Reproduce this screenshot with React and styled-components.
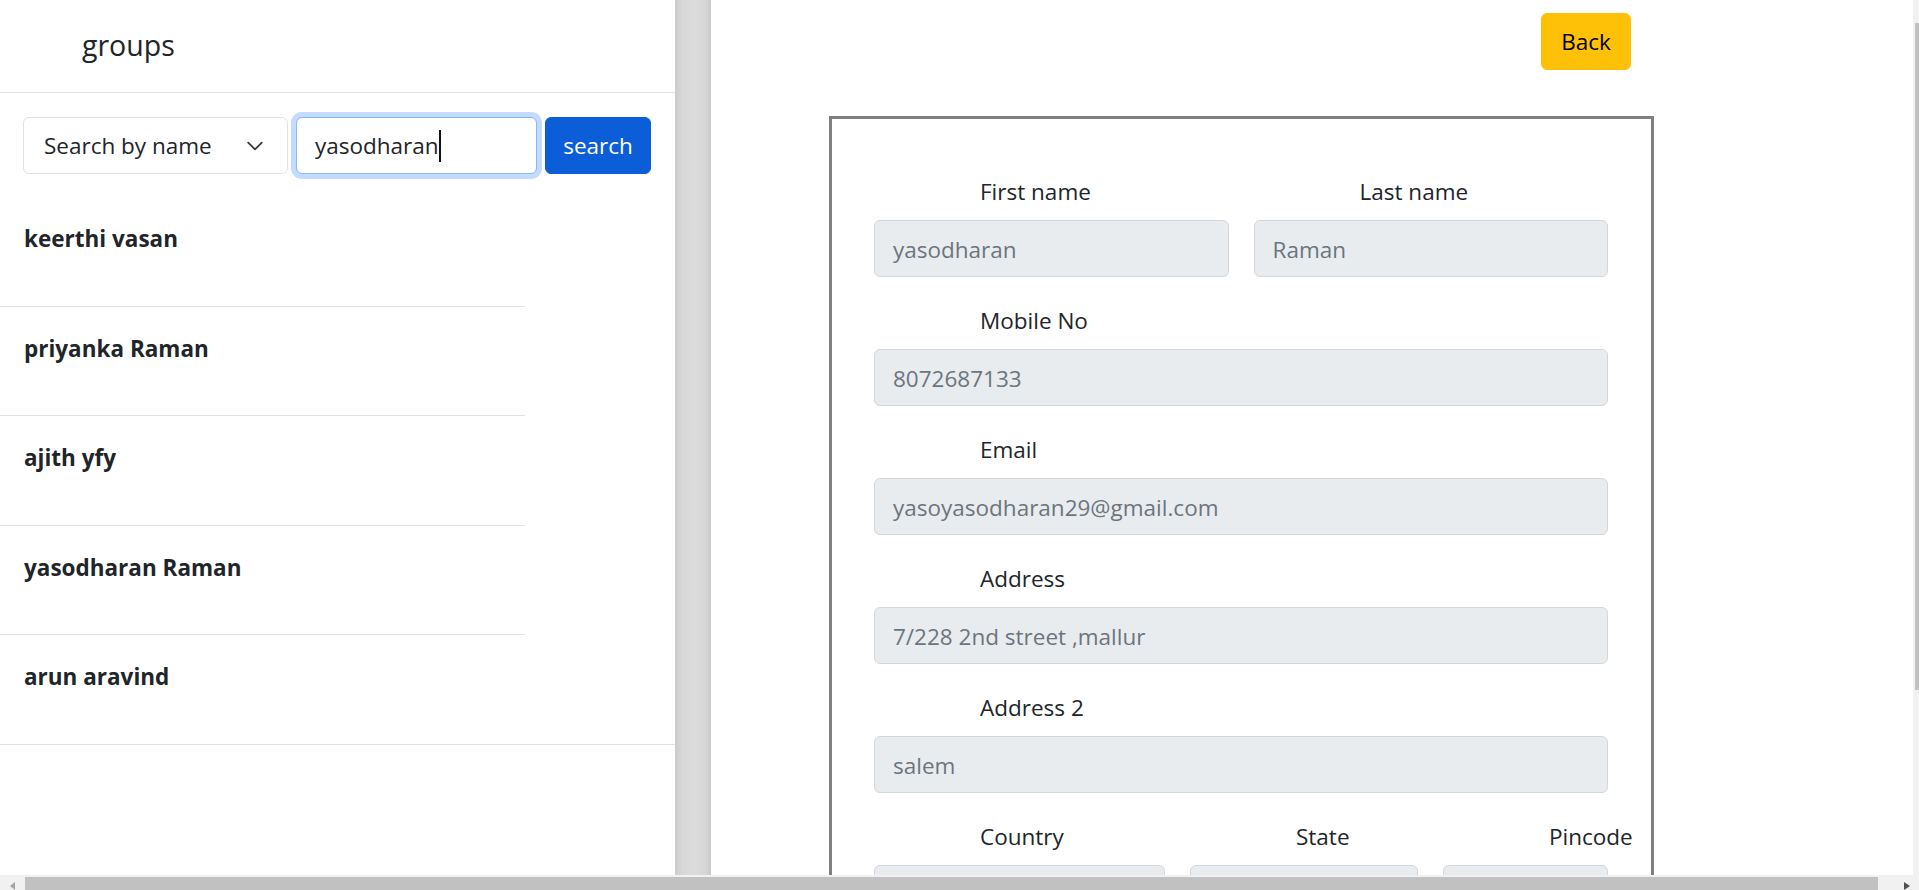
import React from "react";
import styled, { createGlobalStyle } from "styled-components";

const GlobalStyle = createGlobalStyle`
  html, body { margin: 0; padding: 0; overflow: hidden; background: #fff; }
  body { font-family: "Open Sans", "Noto Sans", sans-serif; color: #212529; }
  * { box-sizing: border-box; }
`;

const Screen = styled.div`
  width: 1919px;
  height: 890px;
  display: flex;
  flex-direction: column;
  overflow: hidden;
  background: #fff;
`;

const Workspace = styled.div`
  display: flex;
  height: 875px;
  flex: none;
`;

const Sidebar = styled.aside`
  width: 675px;
  flex: none;
  background: #fff;
  overflow: hidden;
`;

const SidebarHeader = styled.header`
  height: 93px;
  border-bottom: 1px solid #dee2e6;
  display: flex;
  align-items: center;
  padding-left: 82px;
`;

const Title = styled.h1`
  margin: 0;
  font-size: 28.5px;
  font-weight: 500;
  line-height: 1.2;
  padding-bottom: 1px;
`;

const SearchRow = styled.div`
  display: flex;
  gap: 8px;
  margin-top: 24px;
  padding-left: 23px;
`;

const fieldBase = `
  height: 57px;
  border-radius: 6px;
  font-size: 22.5px;
  line-height: 36px;
  display: flex;
  align-items: center;
`;

const SelectBox = styled.div`
  ${fieldBase}
  width: 265px;
  border: 1px solid #dee2e6;
  background: #fff;
  padding: 1px 18px 0 20px;
  justify-content: space-between;
  color: #212529;
`;

const Chevron = () => (
  <svg width="24" height="18" viewBox="0 0 16 16" fill="none" style={{ marginRight: 2 }}>
    <path d="m2 5 6 6 6-6" stroke="#343a40" strokeWidth="1.6" strokeLinecap="round" strokeLinejoin="round" />
  </svg>
);

const SearchInput = styled.div`
  ${fieldBase}
  width: 241px;
  border: 1px solid #86b7fe;
  box-shadow: 0 0 0 5px rgba(13, 110, 253, 0.25);
  background: #fff;
  padding: 1px 18px 0;
  color: #212529;
`;

const Caret = styled.span`
  display: inline-block;
  width: 2px;
  height: 32px;
  background: #111;
`;

const PrimaryButton = styled.button`
  ${fieldBase}
  width: 106px;
  justify-content: center;
  border: 1px solid #0b5ed7;
  background: #0b5ed7;
  color: #fff;
  font-family: inherit;
  padding: 1px 0 0;
  cursor: pointer;
`;

const NameList = styled.ul`
  list-style: none;
  margin: 23px 0 0 0;
  padding: 0;
  border-bottom: 1px solid #dee2e6;
`;

const NameItem = styled.li`
  height: ${(p) => (p.$last ? "108.5px" : "109.5px")};
  width: ${(p) => (p.$last ? "100%" : "525px")};
  border-bottom: ${(p) => (p.$last ? "none" : "1px solid #dee2e6")};
  padding: 24px 0 0 24px;
  font-size: 22.5px;
  line-height: 36px;
  font-weight: 700;
  color: #212529;
`;

const Splitter = styled.div`
  width: 36px;
  flex: none;
  background: linear-gradient(to right, #cbcbcb 0%, #d8d8d8 20%, #dcdcdc 55%, #d6d6d6 85%, #c8c8c8 100%);
`;

const Main = styled.main`
  flex: 1;
  min-width: 0;
  overflow: hidden;
  background: #fff;
`;

const TopBar = styled.div`
  display: flex;
  justify-content: flex-end;
  padding: 13px 282px 0 0;
`;

const WarningButton = styled.button`
  ${fieldBase}
  width: 90px;
  justify-content: center;
  border: 1px solid #ffc107;
  background: #ffc107;
  color: #000;
  font-family: inherit;
  padding: 1px 0 0;
  cursor: pointer;
`;

const FormBox = styled.form`
  width: 825px;
  margin: 46px 0 0 118px;
  border: 3px solid #808080;
  padding: 55px 43px 40px 42px;
`;

const Row = styled.div`
  display: grid;
  grid-template-columns: ${(p) => p.$cols || "1fr"};
  column-gap: 25px;
  margin-bottom: 26px;
`;

const Field = styled.div`
  display: flex;
  flex-direction: column;
  min-width: 0;
`;

const Label = styled.label`
  display: block;
  font-size: 22.5px;
  line-height: 36px;
  padding-left: 106px;
  margin-bottom: 10px;
  color: #212529;
  white-space: nowrap;
`;

const ReadonlyInput = styled.div`
  ${fieldBase}
  width: 100%;
  background: #e9ecef;
  border: 1px solid #d3d7dc;
  padding: 2px 18px 0;
  color: #6c757d;
  white-space: nowrap;
  overflow: hidden;
`;

const VScroll = styled.div`
  width: 6px;
  flex: none;
  background: #f1f1f1;
  padding: 23px 0 0 2px;
`;

const VThumb = styled.div`
  width: 4px;
  height: 667px;
  background: #c1c1c1;
`;

const HScroll = styled.div`
  height: 15px;
  flex: none;
  background: #f1f1f1;
  display: flex;
  align-items: flex-start;
`;

const ArrowCell = styled.div`
  width: ${(p) => p.$w}px;
  height: 15px;
  flex: none;
  display: flex;
  justify-content: center;
  padding-top: 7px;
`;

const HThumb = styled.div`
  width: 1853px;
  height: 13px;
  margin-top: 2px;
  background: #c1c1c1;
  flex: none;
`;

const Spacer = styled.div`
  flex: 1;
`;

const names = ["keerthi vasan", "priyanka Raman", "ajith yfy", "yasodharan Raman", "arun aravind"];

export default function App() {
  return (
    <>
      <GlobalStyle />
      <Screen>
        <Workspace>
          <Sidebar>
            <SidebarHeader>
              <Title>groups</Title>
            </SidebarHeader>
            <SearchRow>
              <SelectBox>
                <span>Search by name</span>
                <Chevron />
              </SelectBox>
              <SearchInput>
                <span>yasodharan</span>
                <Caret />
              </SearchInput>
              <PrimaryButton type="button">search</PrimaryButton>
            </SearchRow>
            <NameList>
              {names.map((n, i) => (
                <NameItem key={n} $last={i === names.length - 1}>
                  {n}
                </NameItem>
              ))}
            </NameList>
          </Sidebar>
          <Splitter />
          <Main>
            <TopBar>
              <WarningButton type="button">Back</WarningButton>
            </TopBar>
            <FormBox onSubmit={(e) => e.preventDefault()}>
              <Row $cols="1fr 1fr">
                <Field>
                  <Label>First name</Label>
                  <ReadonlyInput>yasodharan</ReadonlyInput>
                </Field>
                <Field>
                  <Label>Last name</Label>
                  <ReadonlyInput>Raman</ReadonlyInput>
                </Field>
              </Row>
              <Row>
                <Field>
                  <Label>Mobile No</Label>
                  <ReadonlyInput>8072687133</ReadonlyInput>
                </Field>
              </Row>
              <Row>
                <Field>
                  <Label>Email</Label>
                  <ReadonlyInput>yasoyasodharan29@gmail.com</ReadonlyInput>
                </Field>
              </Row>
              <Row>
                <Field>
                  <Label>Address</Label>
                  <ReadonlyInput>7/228 2nd street ,mallur</ReadonlyInput>
                </Field>
              </Row>
              <Row>
                <Field>
                  <Label>Address 2</Label>
                  <ReadonlyInput>salem</ReadonlyInput>
                </Field>
              </Row>
              <Row $cols="291fr 228fr 165fr">
                <Field>
                  <Label>Country</Label>
                  <ReadonlyInput />
                </Field>
                <Field>
                  <Label>State</Label>
                  <ReadonlyInput />
                </Field>
                <Field>
                  <Label>Pincode</Label>
                  <ReadonlyInput />
                </Field>
              </Row>
            </FormBox>
          </Main>
          <VScroll>
            <VThumb />
          </VScroll>
        </Workspace>
        <HScroll>
          <ArrowCell $w={25}>
            <svg width="6" height="8" viewBox="0 0 6 8">
              <path d="M5 0 L0 4 L5 8 Z" fill="#a3a3a3" />
            </svg>
          </ArrowCell>
          <HThumb />
          <Spacer />
          <ArrowCell $w={24}>
            <svg width="6" height="8" viewBox="0 0 6 8">
              <path d="M0 0 L6 4 L0 8 Z" fill="#505050" />
            </svg>
          </ArrowCell>
        </HScroll>
      </Screen>
    </>
  );
}
